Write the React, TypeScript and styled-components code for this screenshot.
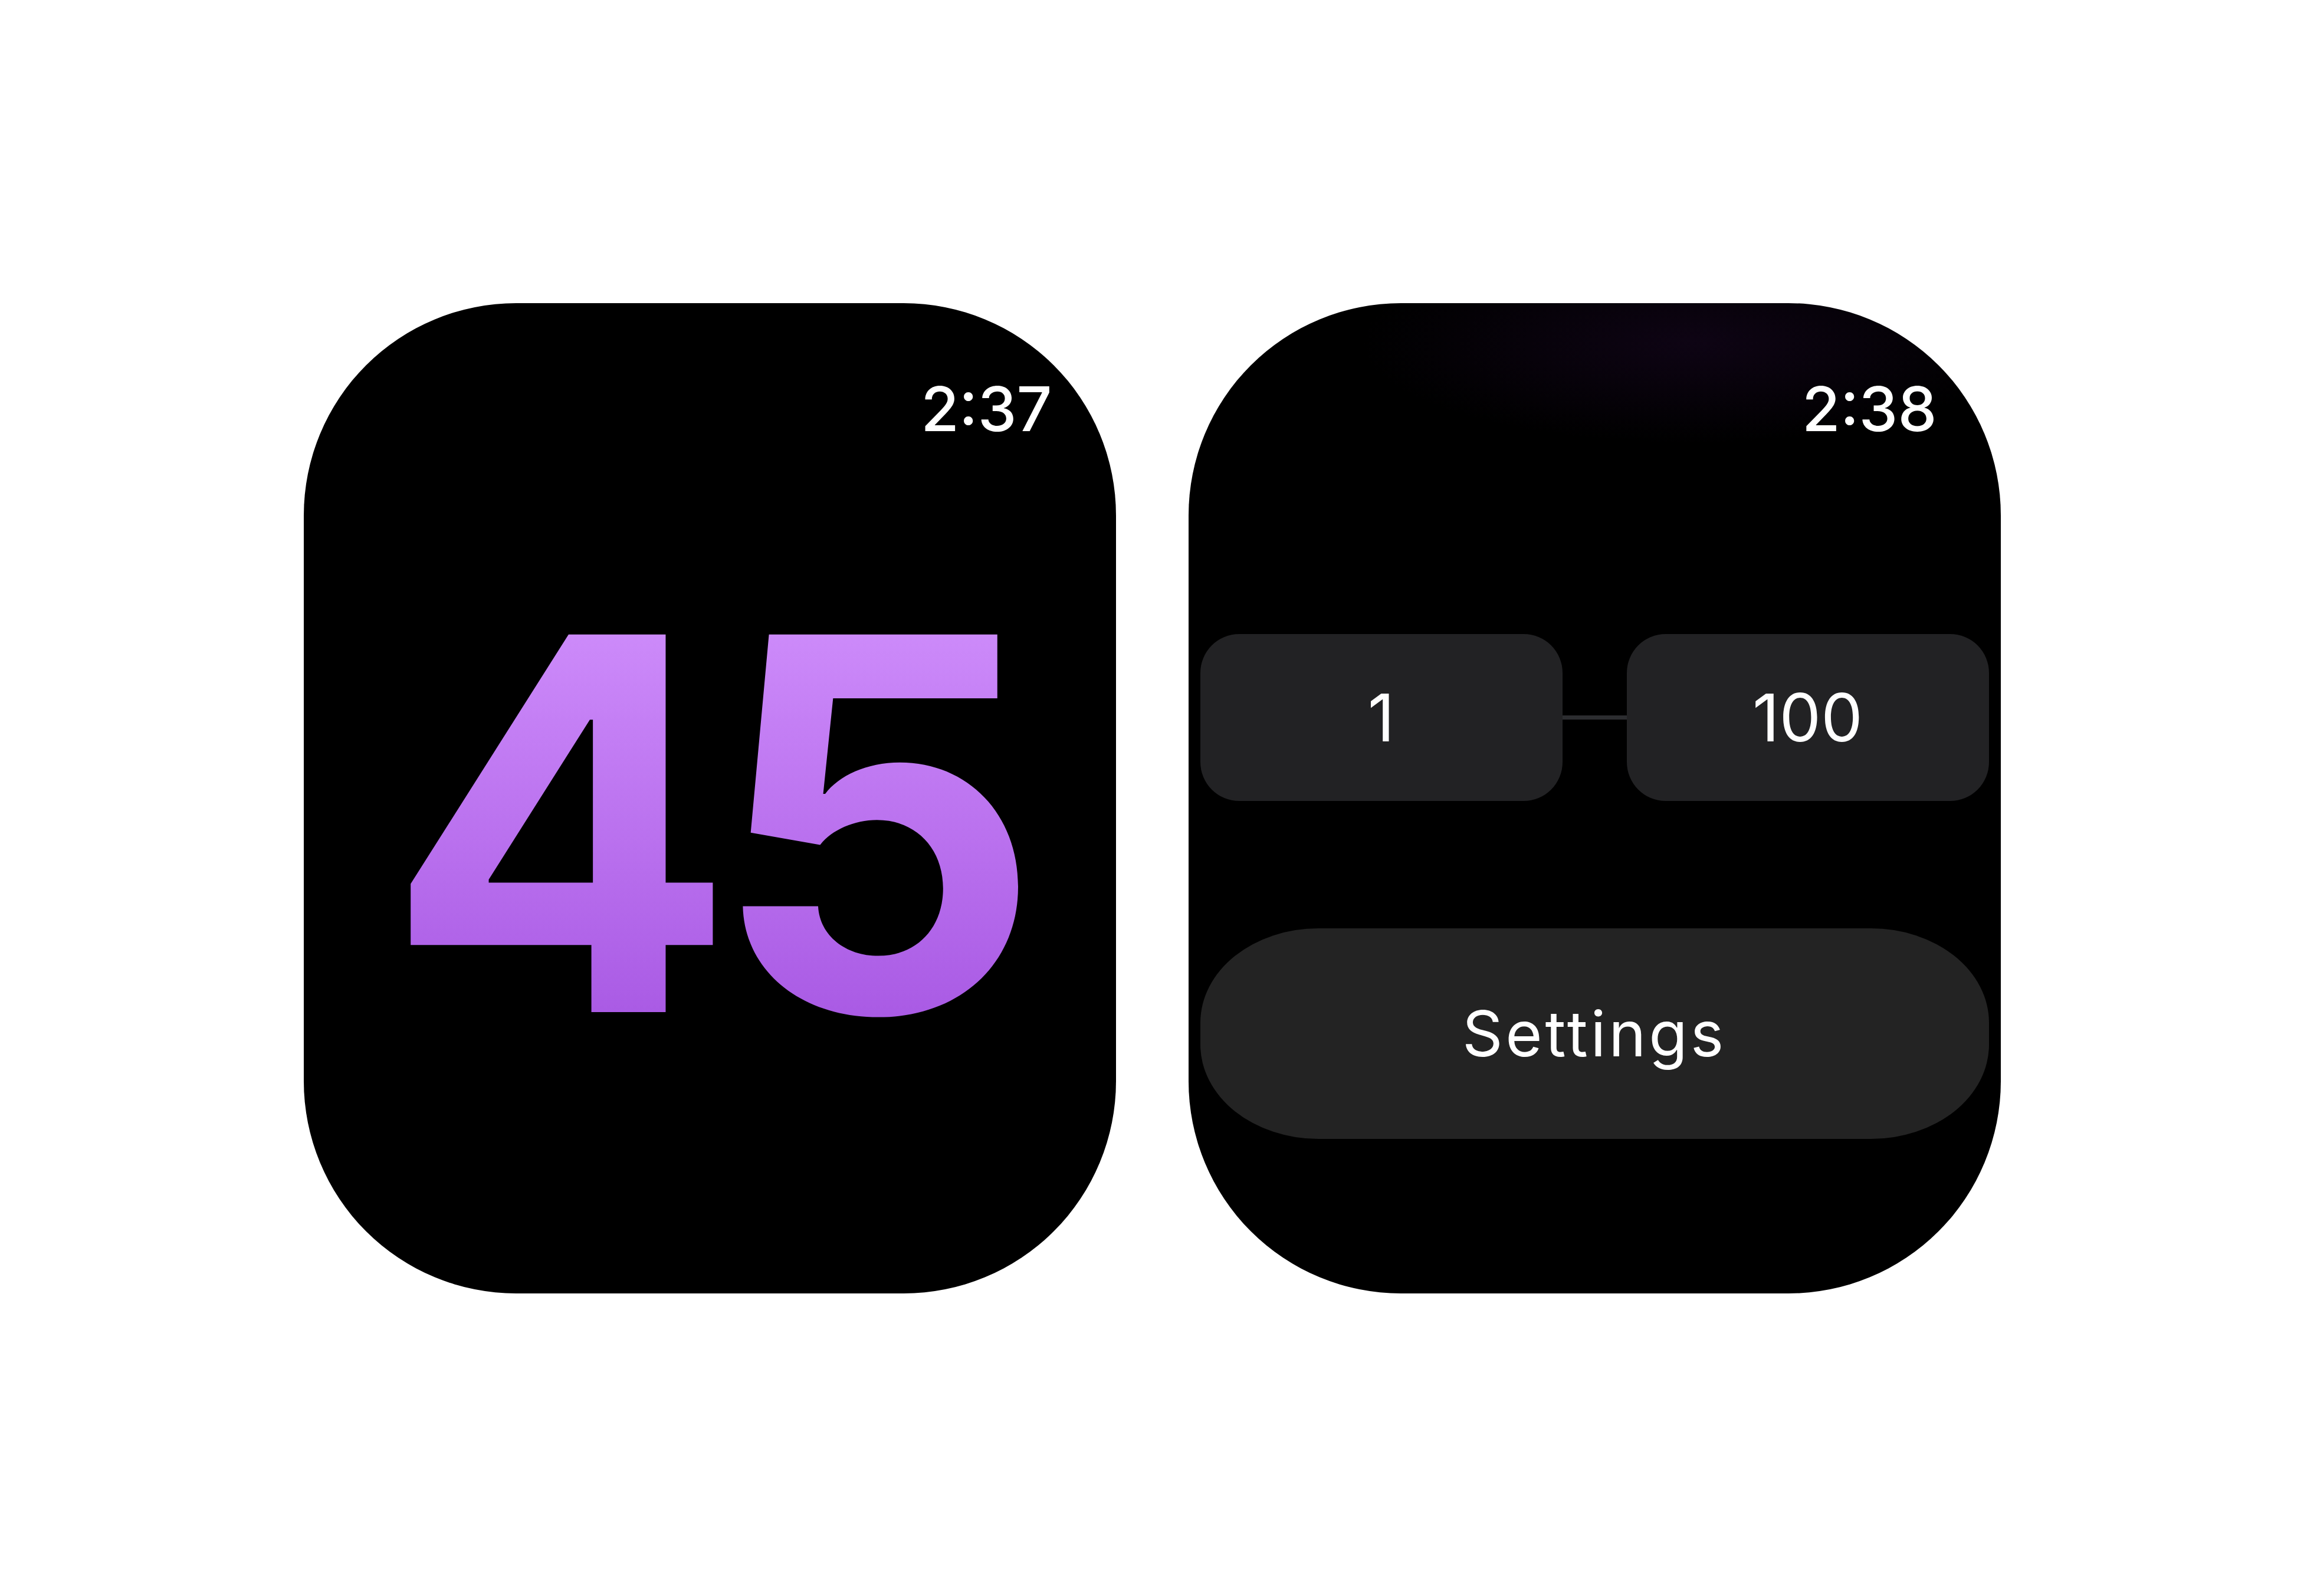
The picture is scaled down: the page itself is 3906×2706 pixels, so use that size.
import styled, { createGlobalStyle } from "styled-components";

const GlobalStyle = createGlobalStyle`
    html, body {
        margin: 0;
        padding: 0;
        background: #ffffff;
    }
    body {
        font-family: Inter, "Liberation Sans", sans-serif;
    }
    * {
        box-sizing: border-box;
    }
`;

const Stage = styled.div`
    min-height: 100vh;
    display: flex;
    justify-content: center;
    align-items: center;
    gap: 123px;
`;

const Watch = styled.div<{ $glow?: boolean }>`
    width: 1377px;
    height: 1679px;
    border-radius: 360px;
    overflow: hidden;
    display: flex;
    flex-direction: column;
    background: ${(p) =>
        p.$glow
            ? "radial-gradient(ellipse 560px 170px at 62% 4%, rgba(50, 14, 72, 0.28), rgba(0, 0, 0, 0) 100%), #000"
            : "#000"};
`;

const StatusBar = styled.div`
    display: flex;
    justify-content: flex-end;
    padding: 126px 108px 0;
`;

const Clock = styled.span`
    color: #ffffff;
    font-size: 105px;
    font-weight: 500;
    line-height: 1;
`;

const Hero = styled.div`
    flex: 1;
    display: flex;
    justify-content: center;
    align-items: center;
    padding: 0 0 146px 22px;
`;

// negative tracking trims the box after the last digit, so pad it back for the clip
const BigNumber = styled.span`
    font-size: 880px;
    font-weight: 700;
    line-height: 1;
    letter-spacing: -0.05em;
    padding-right: 0.06em;
    background: linear-gradient(180deg, #cd8bfa 12%, #a95ae4 88%);
    -webkit-background-clip: text;
    background-clip: text;
    color: transparent;
`;

const Controls = styled.div`
    display: flex;
    flex-direction: column;
    gap: 216px;
    margin-top: 330px;
    padding: 0 20px;
`;

const RangeRow = styled.div`
    display: grid;
    grid-template-columns: 1fr 109px 1fr;
    align-items: center;
    height: 283px;
`;

const ValueBox = styled.div`
    height: 100%;
    display: flex;
    justify-content: center;
    align-items: center;
    border-radius: 66px;
    background: #222224;
    color: #ffffff;
    font-size: 112px;
    font-weight: 400;
    line-height: 1;
`;

const Connector = styled.div`
    height: 7px;
    background: #2c2d30;
`;

const SettingsButton = styled.button`
    height: 357px;
    border: none;
    border-radius: 200px / 160px;
    background: #232323;
    color: #ffffff;
    font-family: inherit;
    font-size: 107px;
    font-weight: 400;
    letter-spacing: 0.045em;
    line-height: 1;
    cursor: pointer;
`;

function App() {
    return (
        <>
            <GlobalStyle />
            <Stage>
                <Watch>
                    <StatusBar>
                        <Clock>2:37</Clock>
                    </StatusBar>
                    <Hero>
                        <BigNumber>45</BigNumber>
                    </Hero>
                </Watch>
                <Watch $glow>
                    <StatusBar>
                        <Clock>2:38</Clock>
                    </StatusBar>
                    <Controls>
                        <RangeRow>
                            <ValueBox>1</ValueBox>
                            <Connector />
                            <ValueBox>100</ValueBox>
                        </RangeRow>
                        <SettingsButton>Settings</SettingsButton>
                    </Controls>
                </Watch>
            </Stage>
        </>
    );
}

export default App;
